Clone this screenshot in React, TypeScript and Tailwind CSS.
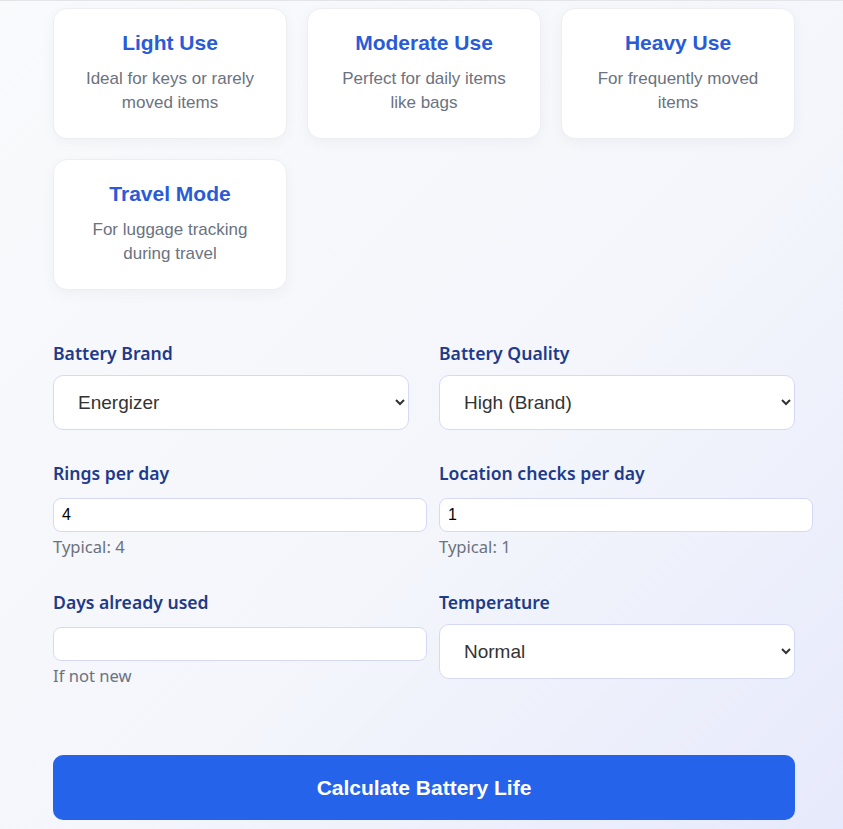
const cards = [
  { title: "Light Use", desc: "Ideal for keys or rarely moved items" },
  { title: "Moderate Use", desc: "Perfect for daily items like bags" },
  { title: "Heavy Use", desc: "For frequently moved items" },
  { title: "Travel Mode", desc: "For luggage tracking during travel" },
];

const labelCls =
  "mb-[10px] block font-['Noto_Sans',sans-serif] text-[17.6px] font-semibold leading-6 text-[#1e3a8a]";
const helperCls = "mt-[3px] font-['Noto_Sans',sans-serif] text-[16.6px] leading-6 text-[#6b7280]";
const selectCls =
  "block h-[55px] w-full rounded-[10px] border border-[#d5d9f6] bg-white pl-5 pr-2 font-['Liberation_Sans',Arial,sans-serif] text-[19px] text-[#333]";
const inputCls =
  "mt-[13px] block box-content w-full rounded-[8px] border border-[#d5d9f6] bg-white px-2 py-[7px] font-['Liberation_Sans',Arial,sans-serif] text-base leading-[18px] text-black";

export default function App() {
  return (
    <div className="min-h-screen border-t border-[#e2e4e8] bg-[linear-gradient(135deg,#f8fafc_0%,#f4f6fb_55%,#e6e9fb_100%)] pb-10">
      <div className="ml-[53px] w-[742px] pt-[7px]">
        <div className="grid grid-cols-3 gap-5">
          {cards.map((c) => (
            <div
              key={c.title}
              className="rounded-[14px] border border-[#eceef2] bg-white px-6 pt-5 pb-[23px] text-center shadow-[0_4px_14px_rgba(15,23,42,0.04)]"
            >
              <h3 className="font-['Liberation_Sans',Arial,sans-serif] text-[21px] leading-7 font-bold text-[#2a5bd7]">
                {c.title}
              </h3>
              <p className="mt-[10px] px-1 font-['Liberation_Sans',Arial,sans-serif] text-[17px] leading-6 text-[#6b7280]">
                {c.desc}
              </p>
            </div>
          ))}
        </div>

        <div className="mt-[51px] grid grid-cols-2 gap-x-[30px] gap-y-[31px]">
          <div>
            <label className={labelCls}>Battery Brand</label>
            <select className={selectCls} defaultValue="Energizer">
              <option>Energizer</option>
              <option>Duracell</option>
              <option>Panasonic</option>
              <option>Generic</option>
            </select>
          </div>
          <div>
            <label className={labelCls}>Battery Quality</label>
            <select className={selectCls} defaultValue="High (Brand)">
              <option>High (Brand)</option>
              <option>Medium</option>
              <option>Low (Generic)</option>
            </select>
          </div>

          <div>
            <label className={labelCls}>Rings per day</label>
            <input type="number" defaultValue={4} className={inputCls} />
            <div className={helperCls}>Typical: 4</div>
          </div>
          <div>
            <label className={labelCls}>Location checks per day</label>
            <input type="number" defaultValue={1} className={inputCls} />
            <div className={helperCls}>Typical: 1</div>
          </div>

          <div>
            <label className={labelCls}>Days already used</label>
            <input type="number" className={inputCls} />
            <div className={helperCls}>If not new</div>
          </div>
          <div>
            <label className={labelCls}>Temperature</label>
            <select className={selectCls} defaultValue="Normal">
              <option>Normal</option>
              <option>Cold</option>
              <option>Hot</option>
            </select>
          </div>
        </div>

        <button
          type="button"
          className="mt-[67px] block h-[65px] w-full rounded-[10px] bg-[#2563eb] font-['Liberation_Sans',Arial,sans-serif] text-[21px] font-bold text-white"
        >
          Calculate Battery Life
        </button>
      </div>
    </div>
  );
}
